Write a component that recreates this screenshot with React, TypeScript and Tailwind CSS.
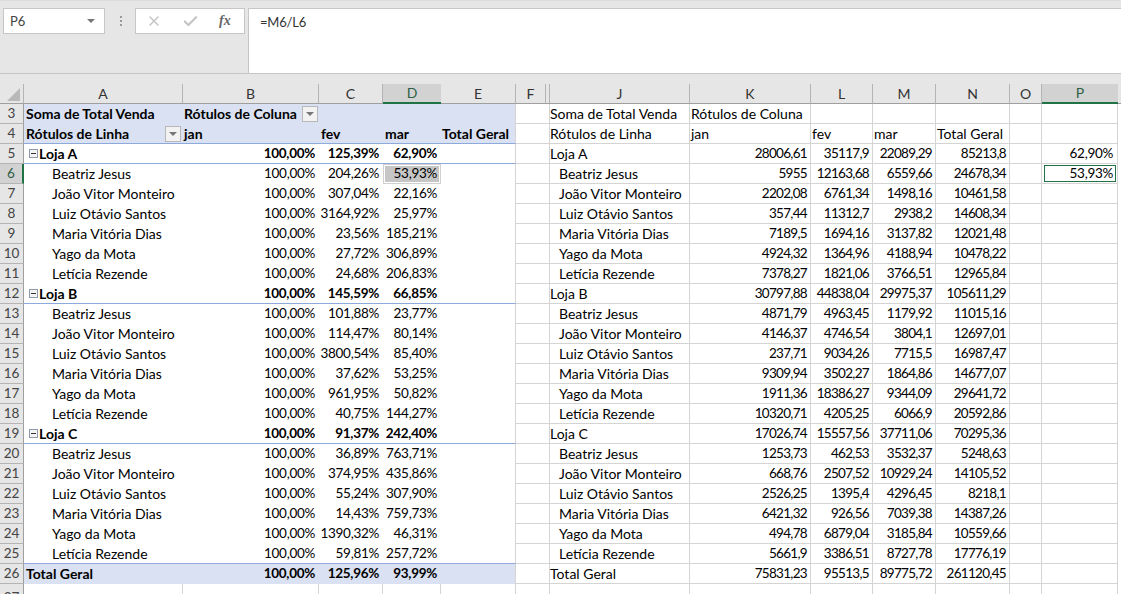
import { X, Check } from 'lucide-react';

const GRID =
  'grid grid-cols-[24px_159px_136px_64px_58px_75px_34px_140px_121px_62px_63px_74px_32px_76px_3px] h-5 shrink-0';

// Lato digits run wider than the sheet's font, so figures get pulled in
const FIG = 'text-[13.5px] tracking-[-0.7px]';
const PCT = 'text-[13.5px] tracking-[-0.3px]';

type Row = {
  n: number;
  kind: 'store' | 'person';
  name: string;
  pct: string[];
  values: string[];
};

const rows: Row[] = [
  { n: 5, kind: 'store', name: 'Loja A', pct: ['100,00%', '125,39%', '62,90%'], values: ['28006,61', '35117,9', '22089,29', '85213,8'] },
  { n: 6, kind: 'person', name: 'Beatriz Jesus', pct: ['100,00%', '204,26%', '53,93%'], values: ['5955', '12163,68', '6559,66', '24678,34'] },
  { n: 7, kind: 'person', name: 'João Vitor Monteiro', pct: ['100,00%', '307,04%', '22,16%'], values: ['2202,08', '6761,34', '1498,16', '10461,58'] },
  { n: 8, kind: 'person', name: 'Luiz Otávio Santos', pct: ['100,00%', '3164,92%', '25,97%'], values: ['357,44', '11312,7', '2938,2', '14608,34'] },
  { n: 9, kind: 'person', name: 'Maria Vitória Dias', pct: ['100,00%', '23,56%', '185,21%'], values: ['7189,5', '1694,16', '3137,82', '12021,48'] },
  { n: 10, kind: 'person', name: 'Yago da Mota', pct: ['100,00%', '27,72%', '306,89%'], values: ['4924,32', '1364,96', '4188,94', '10478,22'] },
  { n: 11, kind: 'person', name: 'Letícia Rezende', pct: ['100,00%', '24,68%', '206,83%'], values: ['7378,27', '1821,06', '3766,51', '12965,84'] },
  { n: 12, kind: 'store', name: 'Loja B', pct: ['100,00%', '145,59%', '66,85%'], values: ['30797,88', '44838,04', '29975,37', '105611,29'] },
  { n: 13, kind: 'person', name: 'Beatriz Jesus', pct: ['100,00%', '101,88%', '23,77%'], values: ['4871,79', '4963,45', '1179,92', '11015,16'] },
  { n: 14, kind: 'person', name: 'João Vitor Monteiro', pct: ['100,00%', '114,47%', '80,14%'], values: ['4146,37', '4746,54', '3804,1', '12697,01'] },
  { n: 15, kind: 'person', name: 'Luiz Otávio Santos', pct: ['100,00%', '3800,54%', '85,40%'], values: ['237,71', '9034,26', '7715,5', '16987,47'] },
  { n: 16, kind: 'person', name: 'Maria Vitória Dias', pct: ['100,00%', '37,62%', '53,25%'], values: ['9309,94', '3502,27', '1864,86', '14677,07'] },
  { n: 17, kind: 'person', name: 'Yago da Mota', pct: ['100,00%', '961,95%', '50,82%'], values: ['1911,36', '18386,27', '9344,09', '29641,72'] },
  { n: 18, kind: 'person', name: 'Letícia Rezende', pct: ['100,00%', '40,75%', '144,27%'], values: ['10320,71', '4205,25', '6066,9', '20592,86'] },
  { n: 19, kind: 'store', name: 'Loja C', pct: ['100,00%', '91,37%', '242,40%'], values: ['17026,74', '15557,56', '37711,06', '70295,36'] },
  { n: 20, kind: 'person', name: 'Beatriz Jesus', pct: ['100,00%', '36,89%', '763,71%'], values: ['1253,73', '462,53', '3532,37', '5248,63'] },
  { n: 21, kind: 'person', name: 'João Vitor Monteiro', pct: ['100,00%', '374,95%', '435,86%'], values: ['668,76', '2507,52', '10929,24', '14105,52'] },
  { n: 22, kind: 'person', name: 'Luiz Otávio Santos', pct: ['100,00%', '55,24%', '307,90%'], values: ['2526,25', '1395,4', '4296,45', '8218,1'] },
  { n: 23, kind: 'person', name: 'Maria Vitória Dias', pct: ['100,00%', '14,43%', '759,73%'], values: ['6421,32', '926,56', '7039,38', '14387,26'] },
  { n: 24, kind: 'person', name: 'Yago da Mota', pct: ['100,00%', '1390,32%', '46,31%'], values: ['494,78', '6879,04', '3185,84', '10559,66'] },
  { n: 25, kind: 'person', name: 'Letícia Rezende', pct: ['100,00%', '59,81%', '257,72%'], values: ['5661,9', '3386,51', '8727,78', '17776,19'] },
];

const Num = ({ n, active }: { n: number; active?: boolean }) => (
  <div
    className={`flex items-center justify-center border-b border-b-[#b4b4b4] text-[13.5px] ${
      active ? 'bg-[#d2d2d2] border-r-2 border-r-[#217346] text-[#2f5f46]' : 'bg-[#e6e6e6] border-r border-r-[#9f9f9f] text-[#444]'
    }`}
  >
    {n}
  </div>
);

// plain sheet cell with gridlines
const Cell = ({ text, right, pl = 'pl-px' }: { text?: string; right?: boolean; pl?: string }) => (
  <div
    className={`flex items-center whitespace-nowrap overflow-hidden border-r border-b border-[#d4d4d4] ${
      right ? `justify-end pr-[3px] ${FIG}` : pl
    }`}
  >
    {text}
  </div>
);

const Dropdown = () => (
  <span className="flex h-[16px] w-[16px] shrink-0 items-center justify-center border border-[#b8b8b8] bg-[#f2f2f2]">
    <span className="h-0 w-0 border-x-[4px] border-t-[4px] border-x-transparent border-t-[#777]" />
  </span>
);

const ColHead = ({ label, active }: { label: string; active?: boolean }) => (
  <div
    className={`flex items-center justify-center ${
      active ? 'bg-[#d2d2d2] border-b-2 border-b-[#217346] text-[#2f5f46]' : 'bg-[#e6e6e6] border-r border-r-[#b4b4b4] border-b border-b-[#9f9f9f] text-[#333]'
    }`}
  >
    {label}
  </div>
);

const SheetRow = ({ row }: { row: Row }) => {
  const bold = row.kind === 'store';
  const rule = bold || row.n === 25 ? 'border-b border-b-[#8ea9db]' : '';
  const weight = bold ? 'font-bold' : '';
  const pctCell = `flex items-center justify-end pr-[4px] ${PCT} ${rule} ${weight}`;
  return (
    <div className={GRID}>
      <Num n={row.n} active={row.n === 6} />
      <div className={`flex items-center ${rule} ${weight} ${bold ? 'pl-[5px]' : 'pl-[28px]'}`}>
        {bold && (
          <span className="mr-[1px] flex h-[9px] w-[9px] items-center justify-center border border-[#8c9bb0] bg-[#f4f4f4]">
            <span className="h-px w-[5px] bg-[#333]" />
          </span>
        )}
        {row.name}
      </div>
      <div className={pctCell}>{row.pct[0]}</div>
      <div className={pctCell}>{row.pct[1]}</div>
      {row.n === 6 ? (
        <div className={`flex items-center justify-end border border-[#d0d0d0] bg-[#c6c6c6] pr-[3px] shadow-[inset_0_0_0_1px_#ffffff] ${PCT}`}>
          {row.pct[2]}
        </div>
      ) : (
        <div className={pctCell}>{row.pct[2]}</div>
      )}
      <div className={`border-r border-r-[#d4d4d4] ${rule}`} />
      <Cell />
      <Cell text={row.name} pl={bold ? 'pl-0' : 'pl-[9px]'} />
      <Cell text={row.values[0]} right />
      <Cell text={row.values[1]} right />
      <Cell text={row.values[2]} right />
      <Cell text={row.values[3]} right />
      <Cell />
      {row.n === 5 ? (
        <div className={`flex items-center justify-end border-r border-b border-[#d4d4d4] pr-1 ${PCT}`}>{row.pct[2]}</div>
      ) : row.n === 6 ? (
        <div className={`relative flex items-center justify-end border-r border-b border-[#d4d4d4] pr-1 ${PCT}`}>
          {row.pct[2]}
          <span className="absolute left-[2px] right-px top-px bottom-[1px] border border-[#217346]" />
        </div>
      ) : (
        <Cell />
      )}
      <div />
    </div>
  );
};

export default function App() {
  return (
    <div className="flex h-[594px] w-[1121px] flex-col overflow-hidden bg-white font-['Lato',sans-serif] text-[14px] leading-none text-black">
      {/* formula bar */}
      <div className="h-[84px] shrink-0 border-t border-t-[#dcdcdc] bg-[#e6e6e6] text-[#444]">
        <div className="flex h-[73px] items-start border-b border-b-[#c6c6c6] pt-[7px] pl-[3px]">
          <div className="flex h-[26px] w-[102px] items-center justify-between border border-[#c6c6c6] bg-white pr-[9px] pl-[6px] text-[13px]">
            P6
            <span className="h-0 w-0 border-x-[4px] border-t-[4px] border-x-transparent border-t-[#777]" />
          </div>
          <div className="ml-[15px] flex h-[26px] w-[2px] flex-col items-center justify-center gap-[2px]">
            <span className="h-[2px] w-[2px] bg-[#9a9a9a]" />
            <span className="h-[2px] w-[2px] bg-[#9a9a9a]" />
            <span className="h-[2px] w-[2px] bg-[#9a9a9a]" />
          </div>
          <div className="ml-[13px] flex h-[26px] w-[110px] items-center border border-[#c6c6c6] bg-white pl-[10px]">
            <X size={16} strokeWidth={2.2} className="text-[#c4c4c4]" />
            <Check size={17} strokeWidth={3} className="ml-[20px] text-[#c4c4c4]" />
            <span className="ml-[20px] font-['Liberation_Serif',serif] text-[14px] font-bold italic text-[#666]">fx</span>
          </div>
          <div className="ml-[3px] flex h-[66px] flex-1 border border-r-0 border-[#c6c6c6] bg-white pt-[7px] pl-[11px] text-[13px] tracking-[-0.2px] text-[#333]">
            =M6/L6
          </div>
        </div>
      </div>

      {/* column headers */}
      <div className={`${GRID} text-[14px]`}>
        <div className="flex items-end justify-end border-r border-b border-r-[#b4b4b4] border-b-[#9f9f9f] bg-[#e6e6e6] pr-[3px] pb-[2px]">
          <svg width="13" height="13" viewBox="0 0 13 13">
            <path d="M13 0V13H0Z" fill="#b8b8b8" />
          </svg>
        </div>
        {['A', 'B', 'C'].map((c) => (
          <ColHead key={c} label={c} />
        ))}
        <ColHead label="D" active />
        <ColHead label="E" />
        {/* G:I are hidden, hence the double line after F */}
        <div className="flex border-b border-b-[#9f9f9f] bg-[#e6e6e6]">
          <div className="flex w-[30px] items-center justify-center border-r border-r-[#b4b4b4] text-[#333]">F</div>
          <div className="flex-1 border-r border-r-[#b4b4b4]" />
        </div>
        {['J', 'K', 'L', 'M', 'N', 'O'].map((c) => (
          <ColHead key={c} label={c} />
        ))}
        <ColHead label="P" active />
        <div className="border-b border-b-[#9f9f9f] bg-[#e6e6e6]" />
      </div>

      {/* row 3 */}
      <div className={GRID}>
        <Num n={3} />
        <div className="flex items-center bg-[#d9e1f2] pl-[2px] font-bold">Soma de Total Venda</div>
        <div className="flex items-center justify-between bg-[#d9e1f2] pr-px pl-px font-bold">
          Rótulos de Coluna
          <Dropdown />
        </div>
        <div className="bg-[#d9e1f2]" />
        <div className="bg-[#d9e1f2]" />
        <div className="border-r border-r-[#d4d4d4] bg-[#d9e1f2]" />
        <Cell />
        <Cell text="Soma de Total Venda" pl="pl-0" />
        <Cell text="Rótulos de Coluna" />
        <Cell />
        <Cell />
        <Cell />
        <Cell />
        <Cell />
        <div />
      </div>

      {/* row 4 */}
      <div className={GRID}>
        <Num n={4} />
        <div className="flex items-center justify-between border-b border-b-[#8ea9db] bg-[#d9e1f2] pr-[2px] pl-[2px] font-bold">
          Rótulos de Linha
          <Dropdown />
        </div>
        <div className="flex items-center border-b border-b-[#8ea9db] bg-[#d9e1f2] pl-px font-bold">jan</div>
        <div className="flex items-center border-b border-b-[#8ea9db] bg-[#d9e1f2] pl-[2px] font-bold">fev</div>
        <div className="flex items-center border-b border-b-[#8ea9db] bg-[#d9e1f2] pl-[2px] font-bold">mar</div>
        <div className="flex items-center border-r border-b border-r-[#d4d4d4] border-b-[#8ea9db] bg-[#d9e1f2] pl-px font-bold">
          Total Geral
        </div>
        <Cell />
        <Cell text="Rótulos de Linha" pl="pl-0" />
        <Cell text="jan" />
        <Cell text="fev" />
        <Cell text="mar" />
        <Cell text="Total Geral" />
        <Cell />
        <Cell />
        <div />
      </div>

      {rows.map((row) => (
        <SheetRow key={row.n} row={row} />
      ))}

      {/* row 26 */}
      <div className={GRID}>
        <Num n={26} />
        <div className="flex items-center bg-[#d9e1f2] pl-[2px] font-bold">Total Geral</div>
        <div className={`flex items-center justify-end bg-[#d9e1f2] pr-[4px] font-bold ${PCT}`}>100,00%</div>
        <div className={`flex items-center justify-end bg-[#d9e1f2] pr-[4px] font-bold ${PCT}`}>125,96%</div>
        <div className={`flex items-center justify-end bg-[#d9e1f2] pr-[4px] font-bold ${PCT}`}>93,99%</div>
        <div className="border-r border-r-[#d4d4d4] bg-[#d9e1f2]" />
        <Cell />
        <Cell text="Total Geral" pl="pl-0" />
        <Cell text="75831,23" right />
        <Cell text="95513,5" right />
        <Cell text="89775,72" right />
        <Cell text="261120,45" right />
        <Cell />
        <Cell />
        <div />
      </div>

      {/* row 27, cut off by the window */}
      <div className={GRID}>
        <div className="flex items-start justify-center border-r border-r-[#9f9f9f] bg-[#e6e6e6] pt-[7px] text-[13.5px] text-[#444]">27</div>
        {Array.from({ length: 13 }, (_, i) => (
          <Cell key={i} />
        ))}
        <div />
      </div>
    </div>
  );
}
